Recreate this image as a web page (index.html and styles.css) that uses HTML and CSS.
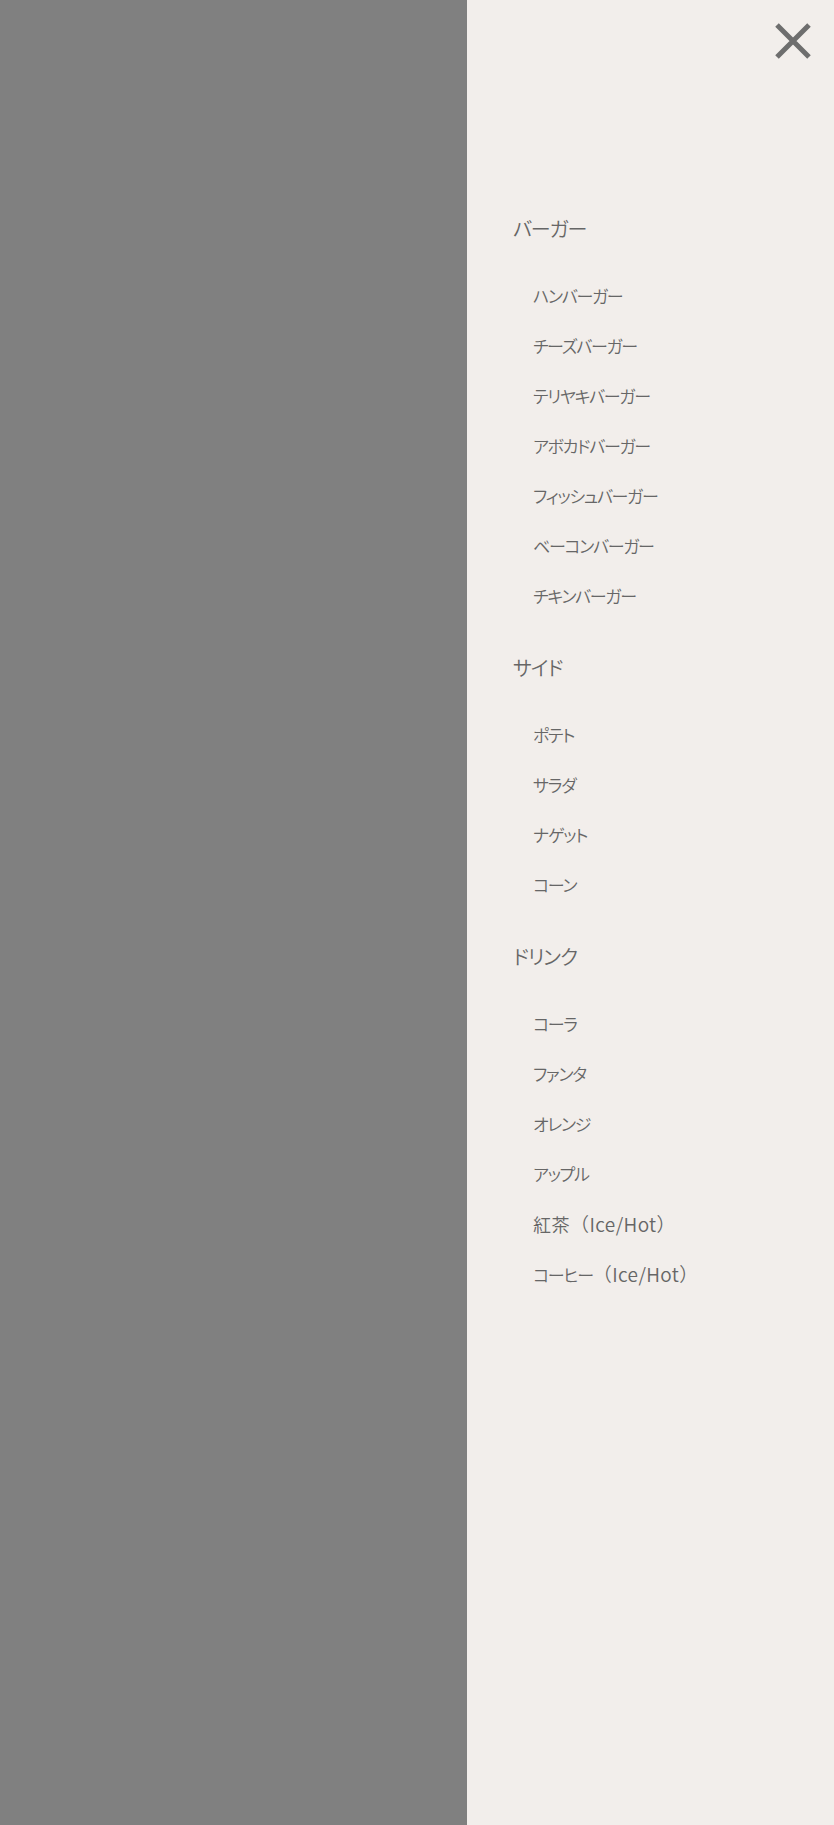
FILE: index.html
```html
<!DOCTYPE html>
<html lang="ja">
<head>
<meta charset="utf-8">
<title>Menu</title>
<link rel="stylesheet" href="styles.css">
</head>
<body>
<div class="screen">
  <div class="overlay"></div>
  <aside class="drawer">
    <div class="drawer-head">
      <button class="close" aria-label="閉じる">
        <svg width="36" height="36" viewBox="0 0 36 36"><path d="M2 2 L34 34 M34 2 L2 34" stroke="#6e6e6e" stroke-width="5" fill="none"/></svg>
      </button>
    </div>
    <nav class="menu">
      <section class="group">
        <h2 class="group-title">バーガー</h2>
        <ul class="items">
          <li>ハンバーガー</li>
          <li>チーズバーガー</li>
          <li>テリヤキバーガー</li>
          <li>アボカドバーガー</li>
          <li>フィッシュバーガー</li>
          <li>ベーコンバーガー</li>
          <li>チキンバーガー</li>
        </ul>
      </section>
      <section class="group">
        <h2 class="group-title">サイド</h2>
        <ul class="items">
          <li>ポテト</li>
          <li>サラダ</li>
          <li>ナゲット</li>
          <li>コーン</li>
        </ul>
      </section>
      <section class="group">
        <h2 class="group-title">ドリンク</h2>
        <ul class="items">
          <li>コーラ</li>
          <li>ファンタ</li>
          <li>オレンジ</li>
          <li>アップル</li>
          <li><span class="kanji">紅茶</span><span class="note">（Ice/Hot）</span></li>
          <li>コーヒー<span class="note">（Ice/Hot）</span></li>
        </ul>
      </section>
    </nav>
  </aside>
</div>
</body>
</html>
```
FILE: styles.css
```css
html, body {
  margin: 0;
  padding: 0;
}
body {
  font-family: "Noto Sans CJK JP", "Noto Sans", sans-serif;
  color: #666666;
}
.screen {
  display: flex;
  height: 1825px;
}
.overlay {
  flex: 1;
  background: #808080;
}
.drawer {
  width: 367px;
  background: #f2eeeb;
  display: flex;
  flex-direction: column;
}
.drawer-head {
  display: flex;
  justify-content: flex-end;
  padding: 23px 23px 0 0;
}
.close {
  width: 36px;
  height: 36px;
  padding: 0;
  border: 0;
  background: none;
  display: block;
}
.close svg {
  display: block;
}
.menu {
  padding: 155px 0 0 46px;
  display: flex;
  flex-direction: column;
  gap: 32px;
  font-feature-settings: "palt";
  font-weight: 350;
}
.group-title {
  margin: 0 0 27px;
  font-size: 20px;
  font-weight: 350;
  line-height: 30px;
  letter-spacing: -1px;
}
.items {
  list-style: none;
  margin: 0;
  padding: 0 0 0 20px;
}
.items li {
  font-size: 17px;
  line-height: 50px;
  height: 50px;
  letter-spacing: -1.3px;
}
.kanji {
  font-size: 18px;
  letter-spacing: 0.5px;
}
.note {
  font-feature-settings: normal;
  letter-spacing: 0.4px;
  font-size: 19px;
}
```
